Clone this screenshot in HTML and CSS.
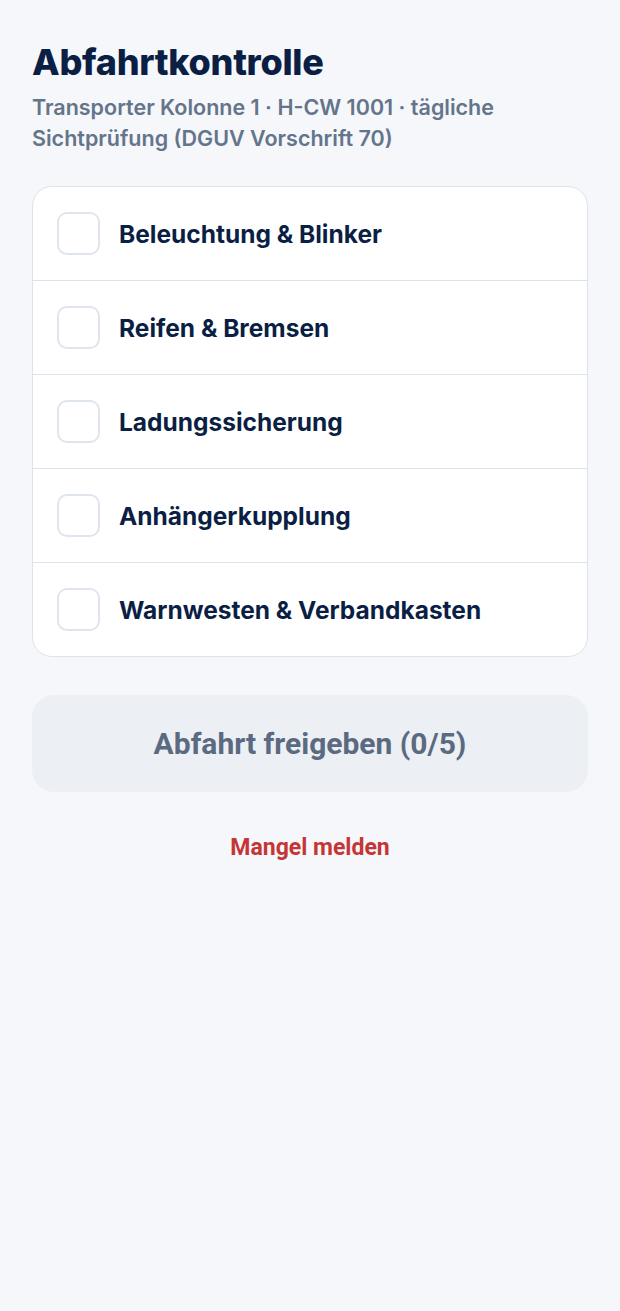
FILE: index.html
```html
<!DOCTYPE html>
<html lang="de">
<head>
    <meta charset="UTF-8">
    <meta name="viewport" content="width=device-width, initial-scale=1.0">
    <title>Abfahrtkontrolle</title>
    <link rel="stylesheet" href="styles.css">
</head>
<body>
    <div class="page">
        <!-- Kopfbereich -->
        <header class="header">
            <h1>Abfahrtkontrolle</h1>
            <p class="subtitle">Transporter Kolonne 1 · H-CW 1001 · tägliche Sichtprüfung (DGUV Vorschrift 70)</p>
        </header>

        <!-- Checkliste -->
        <ul class="checklist">
            <li class="check-item"><span class="box"></span><span class="label">Beleuchtung &amp; Blinker</span></li>
            <li class="check-item"><span class="box"></span><span class="label">Reifen &amp; Bremsen</span></li>
            <li class="check-item"><span class="box"></span><span class="label">Ladungssicherung</span></li>
            <li class="check-item"><span class="box"></span><span class="label">Anhängerkupplung</span></li>
            <li class="check-item"><span class="box"></span><span class="label">Warnwesten &amp; Verbandkasten</span></li>
        </ul>

        <button class="release" disabled>Abfahrt freigeben (0/5)</button>
        <a href="#" class="report">Mangel melden</a>
    </div>
</body>
</html>
```

FILE: styles.css
```css
body {
    margin: 0;
    padding: 0;
    background-color: #f5f7fa;
    font-family: Inter, "Noto Sans", sans-serif;
    color: #0b1f44;
}

.page {
    padding: 40px 32px;
    display: flex;
    flex-direction: column;
}

.header h1 {
    margin: 0;
    font-size: 36px;
    font-weight: 800;
    letter-spacing: -0.3px;
    line-height: 44px;
    color: #0b1f44;
}

.subtitle {
    margin: 8px 0 0;
    font-size: 21.5px;
    font-weight: 600;
    line-height: 31px;
    color: #64748b;
}

.checklist {
    list-style: none;
    margin: 32px 0 0;
    padding: 0;
    background-color: #fff;
    border: 1px solid #dde3ea;
    border-radius: 20px;
    overflow: hidden;
}

.check-item {
    display: flex;
    align-items: center;
    gap: 19px;
    height: 93px;
    padding: 0 24px;
    border-bottom: 1px solid #dde3ea;
}

.check-item:last-child {
    border-bottom: none;
}

.box {
    width: 39px;
    height: 39px;
    border: 2px solid #dfe5ed;
    border-radius: 10px;
    flex-shrink: 0;
}

.label {
    font-size: 24.5px;
    font-weight: 700;
    color: #0b1f44;
}

.release {
    margin-top: 38px;
    height: 97px;
    border: none;
    border-radius: 22px;
    background-color: #ecf0f4;
    color: #5b6a80;
    font-family: Roboto, "Liberation Sans", sans-serif;
    font-size: 30px;
    font-weight: 700;
}

.report {
    margin-top: 42px;
    align-self: center;
    color: #c53535;
    font-family: Roboto, "Liberation Sans", sans-serif;
    font-size: 23px;
    font-weight: 700;
    text-decoration: none;
}
```
